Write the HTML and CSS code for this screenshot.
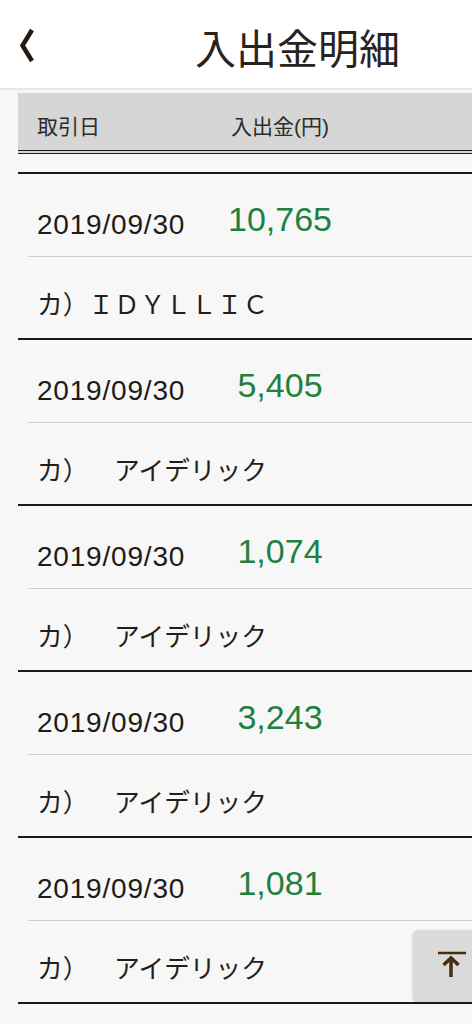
FILE: index.html
```html
<!DOCTYPE html>
<html lang="ja">
<head>
  <meta charset="UTF-8">
  <meta name="viewport" content="width=device-width, initial-scale=1.0">
  <title>入出金明細</title>
  <link rel="stylesheet" href="styles.css">
</head>
<body>
  <header class="header">
    <a class="back" href="#">
      <svg width="20" height="44" viewBox="0 0 20 44">
        <polyline points="14,8 4.5,23.5 14,39" fill="none" stroke="#231a12" stroke-width="4.5"/>
      </svg>
    </a>
    <h1 class="title">入出金明細</h1>
  </header>

  <div class="list">
    <div class="list-head">
      <span class="col-date">取引日</span>
      <span class="col-amount">入出金(円)</span>
    </div>
    <div class="spacer"></div>

    <div class="item">
      <div class="item-main">
        <span class="date">2019/09/30</span>
        <span class="amount">10,765</span>
      </div>
      <div class="item-name">カ）ＩＤＹＬＬＩＣ</div>
    </div>

    <div class="item">
      <div class="item-main">
        <span class="date">2019/09/30</span>
        <span class="amount">5,405</span>
      </div>
      <div class="item-name">カ）　アイデリック</div>
    </div>

    <div class="item">
      <div class="item-main">
        <span class="date">2019/09/30</span>
        <span class="amount">1,074</span>
      </div>
      <div class="item-name">カ）　アイデリック</div>
    </div>

    <div class="item">
      <div class="item-main">
        <span class="date">2019/09/30</span>
        <span class="amount">3,243</span>
      </div>
      <div class="item-name">カ）　アイデリック</div>
    </div>

    <div class="item">
      <div class="item-main">
        <span class="date">2019/09/30</span>
        <span class="amount">1,081</span>
      </div>
      <div class="item-name">カ）　アイデリック</div>
    </div>
  </div>

  <a class="to-top" href="#">
    <svg width="30" height="30" viewBox="0 0 30 30">
      <line x1="2" y1="3" x2="30" y2="3" stroke="#4a2c10" stroke-width="2.5"/>
      <line x1="15" y1="8" x2="15" y2="27" stroke="#4a2c10" stroke-width="3.5"/>
      <polyline points="7.5,15 15,8 22.5,15" fill="none" stroke="#4a2c10" stroke-width="3.5"/>
    </svg>
  </a>
</body>
</html>
```

FILE: styles.css
```css
body {
  margin: 0;
  background-color: #f7f7f7;
  font-family: "Liberation Sans", "Noto Sans CJK JP", sans-serif;
  color: #231e1a;
  overflow: hidden;
}
.header {
  height: 88px;
  display: flex;
  align-items: center;
  padding-left: 18px;
  background-color: #fff;
  border-bottom: 2px solid #e8e8e8;
}
.back {
  display: flex;
  width: 20px;
}
.title {
  flex: 1;
  margin: 0;
  padding-left: 85px;
  padding-top: 4px;
  text-align: center;
  font-family: "Noto Sans CJK JP", sans-serif;
  font-size: 41px;
  font-weight: normal;
  line-height: 44px;
  color: #2a231d;
}
.list {
  margin: 3px 0 0 18px;
}
.list-head {
  height: 61px;
  display: flex;
  align-items: center;
  padding: 6px 0 0 19px;
  box-sizing: border-box;
  background-color: #d6d6d6;
  border-bottom: 4px double #1f1a16;
  font-size: 21px;
  color: #2e2a26;
}
.col-date {
  width: 156px;
}
.col-amount {
  width: 174px;
  text-align: center;
}
.spacer {
  height: 18px;
  border-bottom: 2px solid #1f1a16;
}
.item {
  border-bottom: 2px solid #1f1a16;
}
.item-main {
  height: 82px;
  display: flex;
  align-items: flex-start;
  margin-left: 10px;
  padding-left: 9px;
  border-bottom: 1px solid #d0d0d0;
}
.date {
  width: 156px;
  margin-top: 37px;
  font-size: 28px;
  line-height: 28px;
  letter-spacing: 0.8px;
  color: #221b15;
}
.amount {
  width: 174px;
  margin-top: 28px;
  text-align: center;
  font-size: 34px;
  line-height: 34px;
  color: #22803f;
}
.item-name {
  height: 81px;
  box-sizing: border-box;
  padding: 33px 0 0 19px;
  font-family: "Noto Sans CJK JP", sans-serif;
  font-size: 25.7px;
  line-height: 26px;
  text-spacing-trim: space-all;
  font-feature-settings: "chws" 0, "halt" 0;
  color: #231e1a;
}
.to-top {
  position: fixed;
  top: 930px;
  right: -10px;
  width: 69px;
  height: 72px;
  box-sizing: border-box;
  padding: 20px 0 0 23px;
  background-color: #dadada;
  border-radius: 5px;
  box-shadow: 0 1px 3px rgba(0, 0, 0, 0.2);
}
```
